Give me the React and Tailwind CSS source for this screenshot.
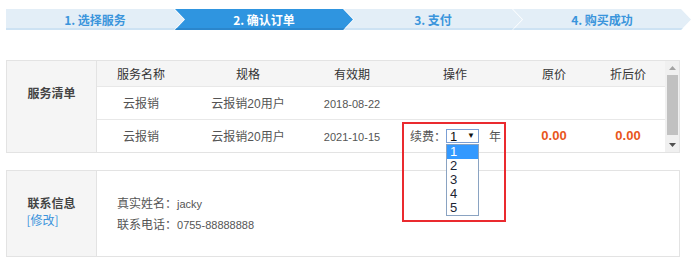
import React from 'react'

const steps = [
    { label: '1. 选择服务', active: false },
    { label: '2. 确认订单', active: true },
    { label: '3. 支付', active: false },
    { label: '4. 购买成功', active: false },
]

const rows = [
    { name: '云报销', date: '2018-08-22', renew: false },
    { name: '云报销', date: '2021-10-15', renew: true },
]

// latin text is set a touch smaller than the CJK text
const L = ({ children, className = '' }) => (
    <span className={"font-['Liberation_Sans',sans-serif] text-[11px] " + className}>{children}</span>
)

const Arrow = ({ up }) => (
    <svg width="7" height="4" viewBox="0 0 7 4" className="block">
        {up ? <path d="M0 4 L3.5 0 L7 4 Z" fill="#a3a3a3" /> : <path d="M0 0 L7 0 L3.5 4 Z" fill="#505050" />}
    </svg>
)

const App = () => {
  return (
    <div className="relative w-[700px] h-[269px] bg-white overflow-hidden text-[12px] text-[#555] font-['Noto_Sans_CJK_SC','Noto_Sans',sans-serif]">
        {/* Steps */}
        <div className="flex ml-[6px] mt-[9px] h-[21px]">
            {steps.map((s, i) => (
                <div
                    key={s.label}
                    className={
                        (i > 0 ? '-ml-[9px] [clip-path:polygon(0_0,calc(100%_-_10px)_0,100%_50%,calc(100%_-_10px)_100%,0_100%,10px_50%)] ' : '[clip-path:polygon(0_0,calc(100%_-_10px)_0,100%_50%,calc(100%_-_10px)_100%,0_100%)] ') +
                        (s.active ? 'bg-[#2f95e0] text-white border-b-2 border-[#2b86cc] ' : 'bg-[#e3eef7] text-[#3a95dc] border-b-2 border-[#cde2f3] ') +
                        'w-[178px] flex items-center justify-center font-bold leading-none pt-[2px]'
                    }
                >
                    {s.label}
                </div>
            ))}
        </div>

        {/* Service list */}
        <div className="mt-[30px] ml-[6px] w-[674px] h-[93px] border border-[#e3e3e3] flex">
            <div className="w-[90px] bg-[#f5f5f5] border-r border-[#e3e3e3] pt-[24px] text-center font-bold text-[#444] leading-[16px]">
                服务清单
            </div>
            <div className="flex-1">
                <div className="grid grid-cols-[88px_126px_82px_124px_74px_1fr] h-[26px] items-center bg-[#f5f5f5] border-b border-[#e8e8e8] text-[#333] text-center">
                    <div>服务名称</div>
                    <div>规格</div>
                    <div>有效期</div>
                    <div>操作</div>
                    <div>原价</div>
                    <div>折后价</div>
                </div>
                {rows.map((r, i) => (
                    <div key={i} className={'grid grid-cols-[88px_126px_82px_124px_74px_1fr] items-center text-center ' + (i === 0 ? 'h-[33px] border-b border-[#e8e8e8]' : 'h-[32px]')}>
                        <div>{r.name}</div>
                        <div>云报销<L className="text-[12px]">20</L>用户</div>
                        <div><L>{r.date}</L></div>
                        {r.renew ? (
                            <>
                                <div className="flex items-center pl-[17px]">
                                    <span className="whitespace-nowrap">续费：</span>
                                    <div className="relative z-20">
                                        <div className="w-[33px] h-[14px] border border-[#7b9fd5] bg-white flex items-center justify-between px-[3px] text-[#111] text-[13px] leading-none font-['Liberation_Sans',sans-serif]">
                                            <span>1</span>
                                            <span className="text-[8px]">▼</span>
                                        </div>
                                        <div className="absolute left-0 top-[15px] w-[33px] border border-[#8aa3c2] bg-white text-[#1c2433] text-[13px] text-left leading-[14px] font-['Liberation_Sans',sans-serif]">
                                            {[1, 2, 3, 4, 5].map(n => (
                                                <div key={n} className={'pl-[3px] h-[14px] ' + (n === 1 ? 'bg-[#3399ff] text-white' : '')}>{n}</div>
                                            ))}
                                        </div>
                                    </div>
                                    <span className="ml-[10px]">年</span>
                                </div>
                                <div className="text-[#e8561c] font-bold font-['Liberation_Sans',sans-serif] text-[13px]">0.00</div>
                                <div className="text-[#e8561c] font-bold font-['Liberation_Sans',sans-serif] text-[13px]">0.00</div>
                            </>
                        ) : (
                            <>
                                <div></div>
                                <div></div>
                                <div></div>
                            </>
                        )}
                    </div>
                ))}
            </div>
            {/* Scrollbar */}
            <div className="w-[14px] bg-[#f0f0f0] flex flex-col items-center">
                <div className="h-[14px] flex items-center justify-center"><Arrow up /></div>
                <div className="w-[11px] h-[60px] bg-[#c1c1c1]"></div>
                <div className="flex-1"></div>
                <div className="h-[14px] flex items-center justify-center"><Arrow /></div>
            </div>
        </div>

        {/* Contact */}
        <div className="mt-[17px] ml-[6px] w-[674px] h-[87px] border border-[#e3e3e3] flex">
            <div className="w-[90px] bg-[#f5f5f5] border-r border-[#e3e3e3] flex flex-col justify-center items-center pb-[6px]">
                <div className="leading-[17px]">
                    <div className="font-bold text-[#444]">联系信息</div>
                    <div className="text-[#3b93dc] -ml-[1px]">[修改]</div>
                </div>
            </div>
            <div className="flex-1 flex flex-col justify-center pl-[20px] leading-[20px]">
                <div>真实姓名：<L>jacky</L></div>
                <div>联系电话：<L>0755-88888888</L></div>
            </div>
        </div>

        {/* Highlight box */}
        <div className="absolute left-[402px] top-[122px] w-[104px] h-[100px] border-2 border-[#ea2a2f] z-30"></div>
    </div>
  )
}

export default App
